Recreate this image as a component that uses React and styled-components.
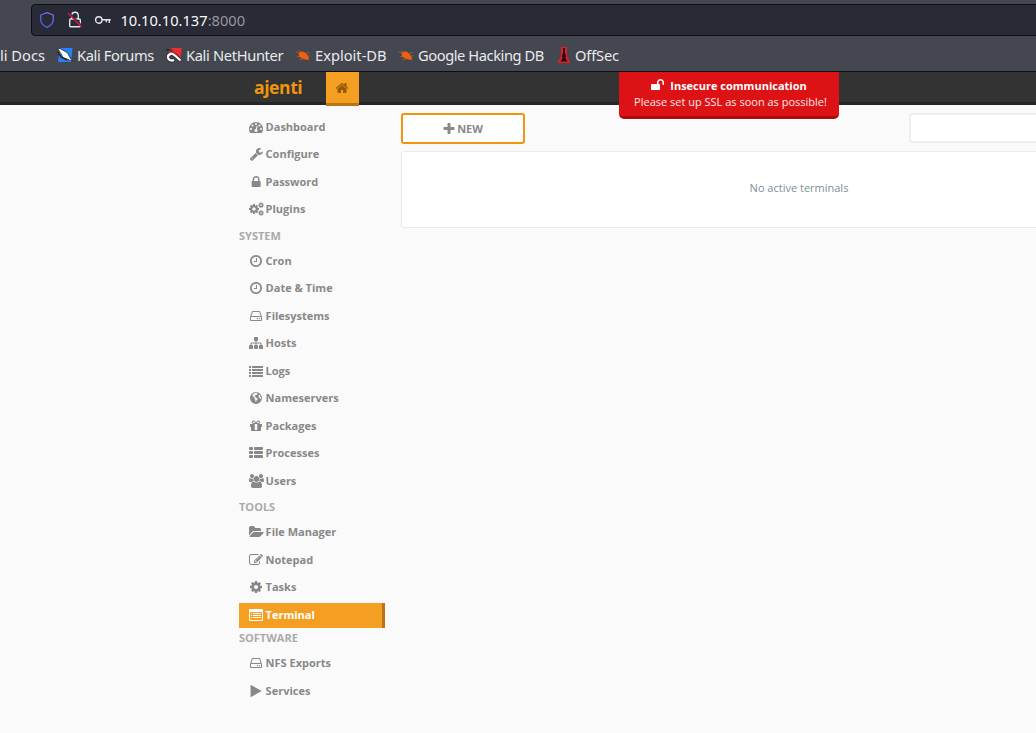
import React from "react";
import styled, { createGlobalStyle } from "styled-components";

const GlobalStyle = createGlobalStyle`
  * { box-sizing: border-box; }
  html, body { margin: 0; padding: 0; height: 100%; overflow: hidden; background: #fafafa; }
  body { font-family: "Open Sans", "Noto Sans", sans-serif; font-size: 11px; color: #888; }
`;

const COG =
  "M1152 896q0-106-75-181t-181-75-181 75-75 181 75 181 181 75 181-75 75-181zm512-109v222q0 12-8 23t-20 13l-185 28q-19 54-39 91 35 50 107 138 10 12 10 25t-9 23q-27 37-99 108t-94 71q-12 0-26-9l-138-108q-44 23-91 38-16 136-29 186-7 28-36 28h-222q-14 0-24.5-8.5t-11.5-21.5l-28-184q-49-16-90-37l-141 107q-10 9-25 9-14 0-25-11-126-114-165-168-7-10-7-23 0-12 8-23 15-21 51-66.5t54-70.5q-27-50-41-99l-183-27q-13-2-21-12.5t-8-23.5v-222q0-12 8-23t19-13l186-28q14-46 39-92-40-57-107-138-10-12-10-24 0-10 9-23 26-36 98.5-107.5t94.5-71.5q13 0 26 10l138 107q44-23 91-38 16-136 29-186 7-28 36-28h222q14 0 24.5 8.5t11.5 21.5l28 184q49 16 90 37l142-107q9-9 24-9 13 0 25 10 129 119 165 170 7 8 7 22 0 12-8 23-15 21-51 66.5t-54 70.5q26 50 41 98l183 28q13 2 21 12.5t8 23.5z";

/* Each glyph: [viewBox width, x origin, path or drawing]; the em height is always 1792. */
const GLYPHS = {
  home: [1792, 0, "M1472 992v480q0 26-19 45t-45 19h-384v-384h-256v384h-384q-26 0-45-19t-19-45v-480q0-1 .5-3t.5-3l575-474 575 474q1 2 1 6zm223-69l-62 74q-8 9-21 11h-3q-13 0-21-7l-692-577-692 577q-12 8-24 7-13-2-21-11l-62-74q-8-10-7-23.5t11-21.5l719-599q32-26 76-26t76 26l244 204v-195q0-14 9-23t23-9h192q14 0 23 9t9 23v408l219 182q10 8 11 21.5t-7 23.5z"],
  clock: [1536, 128, "M1024 544v448q0 14-9 23t-23 9h-320q-14 0-23-9t-9-23v-64q0-14 9-23t23-9h224v-352q0-14 9-23t23-9h64q14 0 23 9t9 23zm416 352q0-148-73-273t-198-198-273-73-273 73-198 198-73 273 73 273 198 198 273 73 273-73 198-198 73-273zm224 0q0 209-103 385.5t-279.5 279.5-385.5 103-385.5-103-279.5-279.5-103-385.5 103-385.5 279.5-279.5 385.5-103 385.5 103 279.5 279.5 103 385.5z"],
  plus: [1536, 128, "M1600 736v192q0 40-28 68t-68 28h-416v416q0 40-28 68t-68 28h-192q-40 0-68-28t-28-68v-416h-416q-40 0-68-28t-28-68v-192q0-40 28-68t68-28h416v-416q0-40 28-68t68-28h192q40 0 68 28t28 68v416h416q40 0 68 28t28 68z"],
  lock: [1152, 370, "M640 768h512v-192q0-106-75-181t-181-75-181 75-75 181v192zm832 96v576q0 40-28 68t-68 28h-960q-40 0-68-28t-28-68v-576q0-40 28-68t68-28h32v-192q0-184 132-316t316-132 316 132 132 316v192h32q40 0 68 28t28 68z"],
  play: [1408, 250, "M1576 927l-1328 738q-23 13-39.5 3t-16.5-36v-1472q0-26 16.5-36t39.5 3l1328 738q23 13 23 31t-23 31z"],
  cog: [1536, 128, COG],
  cogs: [
    1920,
    0,
    <g>
      <path transform="translate(-106 149) scale(.834)" d={COG} />
      <path transform="translate(1155 21) scale(.43)" d={COG} stroke="currentColor" strokeWidth="50" />
      <path transform="translate(1155 1021) scale(.43)" d={COG} stroke="currentColor" strokeWidth="50" />
    </g>,
  ],
  sitemap: [1792, 0, "M1792 1248v320q0 40-28 68t-68 28h-320q-40 0-68-28t-28-68v-320q0-40 28-68t68-28h96v-192h-512v192h96q40 0 68 28t28 68v320q0 40-28 68t-68 28h-320q-40 0-68-28t-28-68v-320q0-40 28-68t68-28h96v-192h-512v192h96q40 0 68 28t28 68v320q0 40-28 68t-68 28h-320q-40 0-68-28t-28-68v-320q0-40 28-68t68-28h96v-192q0-52 38-90t90-38h512v-192h-96q-40 0-68-28t-28-68v-320q0-40 28-68t68-28h320q40 0 68 28t28 68v320q0 40-28 68t-68 28h-96v192h512q52 0 90 38t38 90v192h96q40 0 68 28t28 68z"],
  folder: [1920, 0, "M1879 952q0 31-31 66l-336 396q-43 51-120.5 86.5t-143.5 35.5h-1088q-34 0-60.5-13t-26.5-43q0-31 31-66l336-396q43-51 120.5-86.5t143.5-35.5h1088q34 0 60.5 13t26.5 43zm-343-344v160h-832q-94 0-197 47.5t-164 119.5l-337 396-5 6q0-4-.5-12.5t-.5-12.5v-960q0-92 66-158t158-66h320q92 0 158 66t66 158v32h544q92 0 158 66t66 158z"],
  wrench: [1664, 80, "M448 1472q0-26-19-45t-45-19-45 19-19 45 19 45 45 19 45-19 19-45zm644-420l-682 682q-37 37-90 37-52 0-91-37l-106-108q-38-36-38-90 0-53 38-91l681-681q39 98 114.5 173.5t173.5 114.5zm634-435q0 39-23 106-47 134-164.5 217.5t-258.5 83.5q-185 0-316.5-131.5t-131.5-316.5 131.5-316.5 316.5-131.5q58 0 121.5 16.5t107.5 46.5q16 11 16 28t-16 28l-293 169v224l193 107q5-3 79-48.5t135.5-81 70.5-35.5q15 0 23.5 10t8.5 25z"],
  gauge: [1792, 0, "M384 1152q0-53-37.5-90.5t-90.5-37.5-90.5 37.5-37.5 90.5 37.5 90.5 90.5 37.5 90.5-37.5 37.5-90.5zm192-448q0-53-37.5-90.5t-90.5-37.5-90.5 37.5-37.5 90.5 37.5 90.5 90.5 37.5 90.5-37.5 37.5-90.5zm428 481l101-382q6-26-7.5-48.5t-38.5-29.5-48 6.5-30 39.5l-101 382q-60 5-107 43.5t-63 98.5q-20 77 20 146t117 89 146-20 89-117q16-60-6-117t-72-91zm660-33q0-53-37.5-90.5t-90.5-37.5-90.5 37.5-37.5 90.5 37.5 90.5 90.5 37.5 90.5-37.5 37.5-90.5zm-640-640q0-53-37.5-90.5t-90.5-37.5-90.5 37.5-37.5 90.5 37.5 90.5 90.5 37.5 90.5-37.5 37.5-90.5zm448 192q0-53-37.5-90.5t-90.5-37.5-90.5 37.5-37.5 90.5 37.5 90.5 90.5 37.5 90.5-37.5 37.5-90.5zm320 448q0 261-141 483-19 29-54 29h-1402q-35 0-54-29-141-221-141-483 0-182 71-348t191-286 286-191 348-71 348 71 286 191 191 286 71 348z"],
  disk: [1536, 0, "M1040 1216q0 33-23.5 56.5t-56.5 23.5-56.5-23.5-23.5-56.5 23.5-56.5 56.5-23.5 56.5 23.5 23.5 56.5zm256 0q0 33-23.5 56.5t-56.5 23.5-56.5-23.5-23.5-56.5 23.5-56.5 56.5-23.5 56.5 23.5 23.5 56.5zm112 160v-320q0-13-9.5-22.5t-22.5-9.5h-1216q-13 0-22.5 9.5t-9.5 22.5v320q0 13 9.5 22.5t22.5 9.5h1216q13 0 22.5-9.5t9.5-22.5zm-1230-480h1180l-157-482q-4-13-16-21.5t-26-8.5h-782q-14 0-26 8.5t-16 21.5zm1358 160v320q0 66-47 113t-113 47h-1216q-66 0-113-47t-47-113v-320q0-25 16-75l197-606q17-53 63-86t101-33h782q55 0 101 33t63 86l197 606q16 50 16 75z"],
  users: [1920, 0, "M593 896q-162 5-265 128h-134q-82 0-138-40.5t-56-118.5q0-353 124-353 6 0 43.5 21t97.5 42.5 119 21.5q67 0 133-23-5 37-5 66 0 139 81 256zm1071 637q0 120-73 189.5t-194 69.5h-874q-121 0-194-69.5t-73-189.5q0-53 3.5-103.5t14-109 26.5-108.5 43-97.5 62-81 85.5-53.5 111.5-20q10 0 43 21.5t73 48 107 48 135 21.5 135-21.5 107-48 73-48 43-21.5q61 0 111.5 20t85.5 53.5 62 81 43 97.5 26.5 108.5 14 109 3.5 103.5zm-1024-1277q0 106-75 181t-181 75-181-75-75-181 75-181 181-75 181 75 75 181zm704 384q0 159-112.5 271.5t-271.5 112.5-271.5-112.5-112.5-271.5 112.5-271.5 271.5-112.5 271.5 112.5 112.5 271.5zm576 225q0 78-56 118.5t-138 40.5h-134q-103-123-265-128 81-117 81-256 0-29-5-66 66 23 133 23 59 0 119-21.5t97.5-42.5 43.5-21q124 0 124 353zm-128-609q0 106-75 181t-181 75-181-75-75-181 75-181 181-75 181 75 75 181z"],
  unlock: [1664, 0, "M1664 576v256q0 26-19 45t-45 19h-64q-26 0-45-19t-19-45v-256q0-106-75-181t-181-75-181 75-75 181v192h96q40 0 68 28t28 68v576q0 40-28 68t-68 28h-960q-40 0-68-28t-28-68v-576q0-40 28-68t68-28h672v-192q0-185 131.5-316.5t316.5-131.5 316.5 131.5 131.5 316.5z"],
  edit: [1792, 0, "M888 1184l116-116-152-152-116 116v56h96v96h56zm440-720q-16-16-33 1l-350 350q-17 17-1 33t33-1l350-350q17-17 1-33zm80 594v190q0 119-84.5 203.5t-203.5 84.5h-832q-119 0-203.5-84.5t-84.5-203.5v-832q0-119 84.5-203.5t203.5-84.5h832q63 0 117 25 15 7 18 23 3 17-9 29l-49 49q-14 14-32 8-23-6-45-6h-832q-66 0-113 47t-47 113v832q0 66 47 113t113 47h832q66 0 113-47t47-113v-126q0-13 9-22l64-64q15-15 35-7t20 29zm-96-738l288 288-672 672h-288v-288zm444 132l-92 92-288-288 92-92q28-28 68-28t68 28l152 152q28 28 28 68t-28 68z"],
  gift: [1536, 0, "M928 1356v-56-468-192h-320v192 468 56q0 25 18 38.5t46 13.5h192q28 0 46-13.5t18-38.5zm-456-844h195l-126-161q-26-31-69-31-40 0-68 28t-28 68 28 68 68 28zm688-96q0-40-28-68t-68-28q-43 0-69 31l-125 161h194q40 0 68-28t28-68zm376 256v320q0 14-9 23t-23 9h-96v416q0 40-28 68t-68 28h-1088q-40 0-68-28t-28-68v-416h-96q-14 0-23-9t-9-23v-320q0-14 9-23t23-9h440q-93 0-158.5-65.5t-65.5-158.5 65.5-158.5 158.5-65.5q107 0 168 77l128 165 128-165q61-77 168-77 93 0 158.5 65.5t65.5 158.5-65.5 158.5-158.5 65.5h440q14 0 23 9t9 23z"],
  list: [1792, 0, "M0 256h256v256H0zM384 256h1408v256H384zM0 640h256v256H0zM384 640h1408v256H384zM0 1024h256v256H0zM384 1024h1408v256H384zM0 1408h256v256H0zM384 1408h1408v256H384z"],
  thList: [
    1792,
    0,
    <g>
      {[128, 640, 1152].map((y) => (
        <g key={y}>
          <rect x="0" y={y} width="512" height="384" rx="96" />
          <rect x="640" y={y} width="1152" height="384" rx="96" />
        </g>
      ))}
    </g>,
  ],
  globe: [1536, 0, "M768 128a768 768 0 1 0 0 1536a768 768 0 0 0 0-1536zM760 210L960 260L900 340L980 400L900 510L780 470L690 560L560 600L600 720L720 740L740 860L860 880L960 960L940 1100L830 1220L760 1400L700 1390L690 1150L590 1020L600 900L450 780L300 620L330 470L500 330zM1130 500L1260 480L1360 620L1290 700L1420 850L1380 1040L1290 1000L1240 860L1130 820L1080 720L1150 620z"],
  listAlt: [
    1792,
    0,
    <path d="M160 128h1472q160 0 160 160v1216q0 160-160 160H160q-160 0-160-160V288q0-160 160-160zM128 512v960q0 64 64 64h1408q64 0 64-64V512zM256 640h128v128H256zM512 640h1024v128H512zM256 896h128v128H256zM512 896h1024v128H512zM256 1152h128v128H256zM512 1152h1024v128H512z" />,
  ],
};

const Glyph = styled.svg`
  display: block;
  flex: none;
  fill: currentColor;
`;

function Icon({ name, size = 14 }) {
  const [w, x, art] = GLYPHS[name];
  return (
    <Glyph width={(w * size) / 1792} height={size} viewBox={`${x} 0 ${w} 1792`} overflow="visible">
      {typeof art === "string" ? <path fillRule={name === "globe" ? "evenodd" : undefined} d={art} /> : <g fillRule="evenodd">{art}</g>}
    </Glyph>
  );
}

const Screen = styled.div`
  width: 100%;
  height: 733px;
  overflow: hidden;
  background: #fafafa;
`;

const Chrome = styled.header`
  height: 72px;
  background: #44474f;
  border-bottom: 1px solid #0d0e14;
  font-family: "Noto Sans", sans-serif;
  padding-top: 4px;
`;

const AddressBar = styled.div`
  display: flex;
  align-items: center;
  height: 32px;
  margin-left: 31px;
  width: 1100px;
  background: #282a35;
  border: 1px solid #0d0e14;
  border-radius: 4px;
  padding-left: 7px;
  gap: 11px;
`;

const Url = styled.span`
  font-size: 14.67px;
  line-height: 20px;
  color: #fbfbfe;
  margin-left: -2.6px;
`;

const Port = styled.span`
  color: #96979d;
`;

const Bookmarks = styled.nav`
  display: flex;
  align-items: center;
  height: 38px;
  font-size: 14.67px;
  color: #e9eaec;
  white-space: nowrap;
`;

const Bookmark = styled.span`
  display: flex;
  align-items: center;
  flex: none;
  gap: 4px;
  width: ${(p) => p.$width}px;
  letter-spacing: ${(p) => p.$tracking || 0}px;
`;

const TopBar = styled.div`
  display: flex;
  height: 33px;
  background: #333;
  border-bottom: 3px solid #262626;
  padding-left: 254px;
`;

const Brand = styled.div`
  width: 72px;
  font-size: 17.6px;
  letter-spacing: -0.45px;
  font-weight: 700;
  line-height: 31px;
  color: #ef950f;
`;

const HomeTab = styled.div`
  display: flex;
  justify-content: center;
  padding: 9px 1px 0 0;
  width: 33px;
  height: 34px;
  background: #f59f22;
  border-bottom: 3px solid #b87516;
  color: #935b05;
`;

const Alert = styled.div`
  position: absolute;
  left: 619px;
  top: 72px;
  width: 220px;
  height: 47px;
  background: #dd1214;
  border-bottom: 3px solid #a60d0f;
  border-radius: 0 0 5px 5px;
  color: #ffe9e9;
  text-align: center;
  line-height: 16px;
  padding-top: 6px;
`;

const AlertTitle = styled.div`
  display: flex;
  justify-content: center;
  gap: 6px;
  font-weight: 700;
  color: #fff;
`;

const AlertText = styled.div`
  padding-left: 3px;
`;

const Body = styled.main`
  display: flex;
  padding: 9px 0 0 239px;
  gap: 16px;
`;

const Sidebar = styled.aside`
  width: 146px;
  flex: none;
  margin-top: -0.2px;
`;

const SectionTitle = styled.div`
  height: ${(p) => p.$height || 24}px;
  line-height: ${(p) => (p.$height ? 20 : 23)}px;
  font-weight: 700;
  color: #aaa;
`;

const Item = styled.div`
  display: flex;
  align-items: center;
  height: 25px;
  margin-top: ${(p) => (p.$active ? 3.5 : 0)}px;
  margin-bottom: ${(p) => (p.$active ? 0 : 2.5)}px;
  padding: 0 0 ${(p) => (p.$active ? 1 : 0)}px 10px;
  gap: 2.6px;
  font-weight: 700;
  line-height: ${(p) => (p.$active ? 24 : 25)}px;
  white-space: nowrap;
  color: ${(p) => (p.$active ? "#fff" : "#888")};
  background: ${(p) => (p.$active ? "#f59f22" : "transparent")};
  border-right: 3px solid ${(p) => (p.$active ? "#b87516" : "transparent")};
`;

const IconSlot = styled.span`
  display: flex;
  justify-content: center;
  width: 14px;
  margin-top: 0.8px;
  flex: none;
`;

const Content = styled.section`
  width: 796px;
  flex: none;
`;

const Toolbar = styled.div`
  display: flex;
  justify-content: space-between;
  height: 37px;
`;

const NewButton = styled.button`
  display: flex;
  align-items: center;
  justify-content: center;
  gap: 2px;
  width: 124px;
  height: 31px;
  margin-top: -1px;
  padding: 0;
  background: #fff;
  border: 2px solid #f0950e;
  border-radius: 3px;
  font: 700 11px "Open Sans", sans-serif;
  color: #888;
`;

const CommandInput = styled.input`
  width: 288px;
  height: 30px;
  margin-top: -1px;
  border: 2px solid #eee;
  border-radius: 3px;
  background: #fff;
`;

const Panel = styled.div`
  height: 77px;
  display: flex;
  justify-content: center;
  padding-top: 28px;
  line-height: 15px;
  border: 1px solid #eaeaea;
  border-radius: 3px;
  background: #fff;
  color: #7b8f99;
`;

const Shield = () => (
  <Glyph width="16" height="18" viewBox="0 0 16 18">
    <defs>
      <linearGradient id="shield" x1="0" y1="1" x2="1" y2="0">
        <stop offset="0" stopColor="#3b62e8" />
        <stop offset="1" stopColor="#9068e0" />
      </linearGradient>
    </defs>
    <path d="M8 1.6L14.3 4v4.2c0 3.600-2.600 6.500-6.300 8.100C4.300 14.700 1.700 11.800 1.700 8.200V4z" fill="none" stroke="url(#shield)" strokeWidth="1.3" strokeLinejoin="round" />
  </Glyph>
);

const BrokenLock = () => (
  <Glyph width="17" height="18" viewBox="-1 0 17 18">
    <g fill="none" stroke="#e4e4e8" strokeWidth="1.4">
      <path d="M4.700 8V4.600a3.300 3.300 0 0 1 6.600 0V8" />
      <rect x="2.700" y="8" width="10.600" height="7.800" rx="1" />
    </g>
    <path d="M2 1.500l13.500 14" stroke="#282a35" strokeWidth="1.500" />
    <path d="M1 2l13.500 14" stroke="#e2144c" strokeWidth="1.500" />
  </Glyph>
);

const Key = () => (
  <Glyph width="18" height="18" viewBox="0 0 18 18">
    <g fill="none" stroke="#e4e4e8" strokeWidth="1.400">
      <circle cx="4.800" cy="9" r="3.200" />
      <path d="M8 8.700h8.800M15.300 8.700v3.300M12.300 8.700v2.500" />
    </g>
  </Glyph>
);

const KaliMark = ({ color, hunter }) => (
  <Glyph width="16" height="16" viewBox="0 0 16 16">
    <path d={hunter ? "M5 1h10.500l-1 11-5-4z" : "M3 1h12.500l-1.500 14H1z"} fill={color} />
    {hunter ? (
      <g fill="none">
        <path d="M14.500 13.500L9 8.500C6 5.500 1.500 7 2 10.500c.5 3 3.500 3.500 6 2.500" stroke="#26262b" strokeWidth="3.800" />
        <path d="M.5 2.500l5 2.500" stroke="#26262b" strokeWidth="2" />
        <path d="M2.500 4.500l5 2" stroke="#e02a30" strokeWidth="2.200" />
        <path d="M14.500 13.500L9 8.500C6 5.500 1.500 7 2 10.500c.5 3 3.500 3.500 6 2.500" stroke="#fff" strokeWidth="2.300" />
      </g>
    ) : (
      <g>
        <path d="M.5 1.200l2.500.3 7.500 4.300 2 4 3 4.700-4.500-2-5-2-2.200-4z" fill="#fff" stroke="#26262b" strokeWidth=".8" />
        <path d="M.5 5l4 5.500 6 2.500" stroke="#26262b" strokeWidth="1.400" fill="none" />
      </g>
    )}
  </Glyph>
);

const BugMark = () => (
  <Glyph width="16" height="16" viewBox="0 0 16 16">
    <g fill="#ed5f12" stroke="#ed5f12">
      <path d="M3.500 6q3.500-2.500 6.500-.5 2.500 1.500 4 6-1.500 2-4 1-4-.5-6-3.500z" stroke="none" />
      <path d="M.5 4.500l4 2M3.500 3l3 3M10.500 6.500l4-1M13 9.500l2-1M13 12l1 1.500M8 12l-3.500.3M5 9.500H2" fill="none" strokeWidth=".6" />
    </g>
  </Glyph>
);

const OffSecMark = () => (
  <Glyph width="14" height="16" viewBox="0 0 14 16">
    <path d="M4 0h6v9l3.500 7H.5L4 9z" fill="#dc1f28" />
    <path d="M6 1h2v5l1 3-.6 2 2 3.500H3.600L5.600 11 5 9l1-3z" fill="#35070a" />
  </Glyph>
);

const MENU = [
  { items: [["gauge", "Dashboard"], ["wrench", "Configure"], ["lock", "Password"], ["cogs", "Plugins"]] },
  {
    title: "SYSTEM",
    items: [
      ["clock", "Cron"], ["clock", "Date & Time"], ["disk", "Filesystems"], ["sitemap", "Hosts"], ["list", "Logs"],
      ["globe", "Nameservers"], ["gift", "Packages"], ["thList", "Processes"], ["users", "Users"],
    ],
  },
  { title: "TOOLS", items: [["folder", "File Manager"], ["edit", "Notepad"], ["cog", "Tasks"], ["listAlt", "Terminal"]] },
  { title: "SOFTWARE", height: 22.5, items: [["disk", "NFS Exports"], ["play", "Services"]] },
];

export default function App() {
  return (
    <Screen>
      <GlobalStyle />
      <Chrome>
        <AddressBar>
          <Shield />
          <BrokenLock />
          <Key />
          <Url>10.10.10.137<Port>:8000</Port></Url>
        </AddressBar>
        <Bookmarks>
          <Bookmark $width={57}>li Docs</Bookmark>
          <Bookmark $width={109} $tracking={-0.36}><KaliMark color="#2383fb" />Kali Forums</Bookmark>
          <Bookmark $width={129} $tracking={-0.34}><KaliMark color="#ef2b31" hunter />Kali NetHunter</Bookmark>
          <Bookmark $width={103}><BugMark />Exploit-DB</Bookmark>
          <Bookmark $width={159} $tracking={-0.42}><BugMark />Google Hacking DB</Bookmark>
          <Bookmark $width={80} $tracking={-0.15}><OffSecMark />OffSec</Bookmark>
        </Bookmarks>
      </Chrome>
      <TopBar>
        <Brand>ajenti</Brand>
        <HomeTab><Icon name="home" /></HomeTab>
      </TopBar>
      <Alert>
        <AlertTitle><Icon name="unlock" />Insecure communication</AlertTitle>
        <AlertText>Please set up SSL as soon as possible!</AlertText>
      </Alert>
      <Body>
        <Sidebar>
          {MENU.map((section, i) => (
            <React.Fragment key={i}>
              {section.title && <SectionTitle $height={section.height}>{section.title}</SectionTitle>}
              {section.items.map(([icon, label]) => (
                <Item key={label} $active={label === "Terminal"}>
                  <IconSlot><Icon name={icon} /></IconSlot>
                  {label}
                </Item>
              ))}
            </React.Fragment>
          ))}
        </Sidebar>
        <Content>
          <Toolbar>
            <NewButton><Icon name="plus" />NEW</NewButton>
            <CommandInput aria-label="Command" />
          </Toolbar>
          <Panel>No active terminals</Panel>
        </Content>
      </Body>
    </Screen>
  );
}
